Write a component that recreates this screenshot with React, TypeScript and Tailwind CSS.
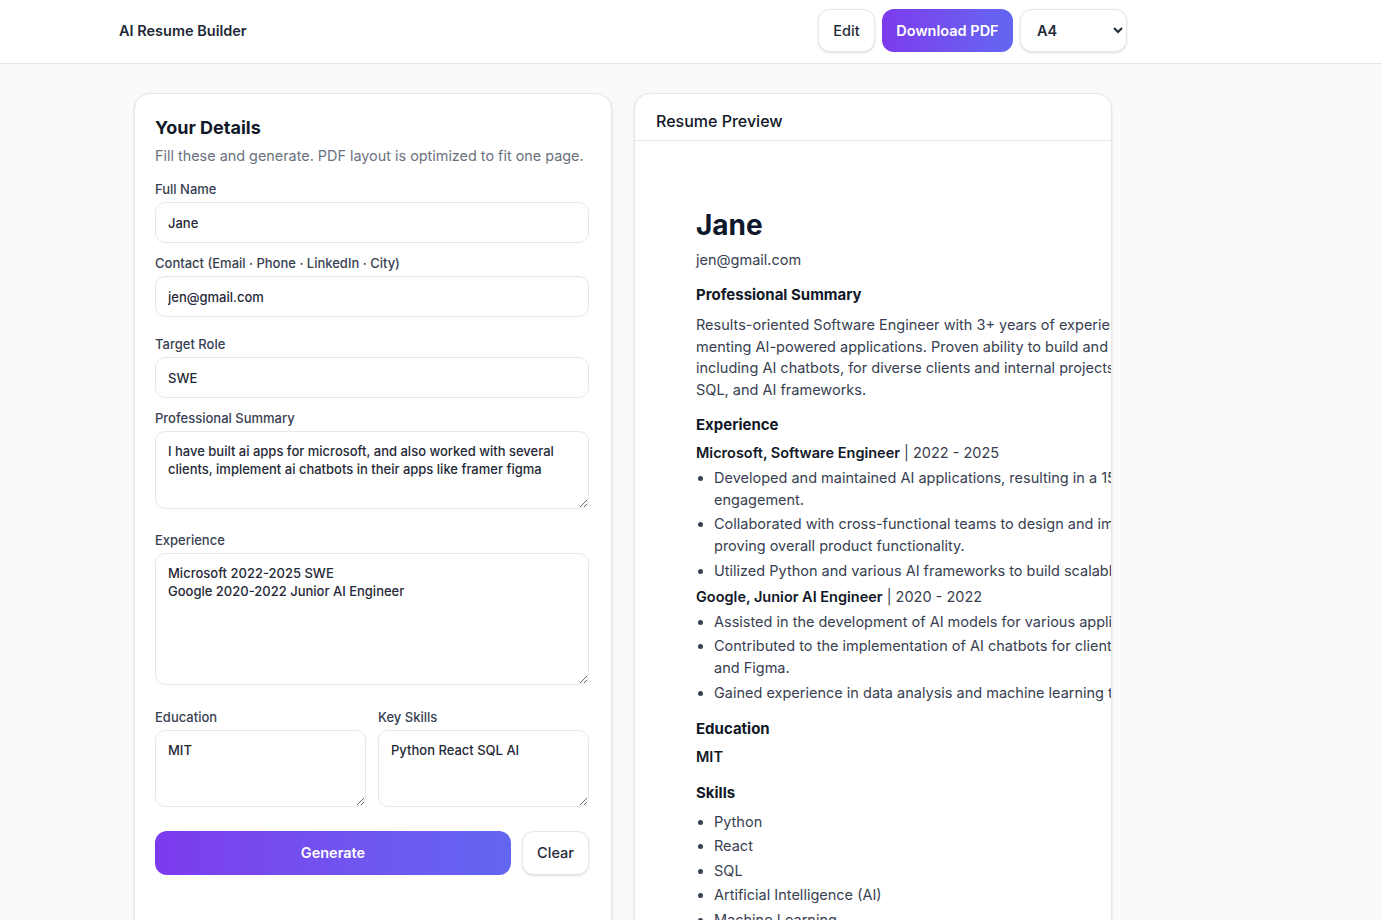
import React from "react";

const inputCls =
  "w-full h-[41px] rounded-[10px] border border-[#e5e7eb] bg-white px-3 text-[13px] font-medium text-[#1f2937] outline-none";
const areaCls =
  "block w-full rounded-[10px] border border-[#e5e7eb] bg-white px-3 pt-[10px] text-[13px] leading-[18px] font-medium text-[#1f2937] outline-none";
const labelCls = "block text-[13px] leading-[18px] font-medium text-[#374151] mb-1";

function Field(p: { label: string; className?: string; children: React.ReactNode }) {
  return (
    <div className={p.className}>
      <label className={labelCls}>{p.label}</label>
      {p.children}
    </div>
  );
}

function Heading(p: { children: React.ReactNode; className?: string }) {
  return <h3 className={"text-[15px] leading-[22px] font-bold text-[#111827] " + (p.className ?? "")}>{p.children}</h3>;
}

export default function App() {
  return (
    <div className="min-h-screen bg-[#f8fafc] font-[family-name:Inter,sans-serif] text-[#1f2937]">
      <header className="h-16 bg-white border-b border-[#e5e7eb]">
        <div className="ml-[119px] w-[1008px] h-full pb-[2px] flex items-center justify-between">
          <div className="text-[14.5px] font-semibold text-[#1f2937]">AI Resume Builder</div>
          <div className="flex items-center gap-[7px]">
            <button className="h-[43px] w-[57px] rounded-xl border border-[#e5e7eb] bg-white shadow-sm text-[14.5px] font-medium text-[#1f2937]">
              Edit
            </button>
            <button className="h-[43px] w-[131px] rounded-xl bg-linear-to-r from-[#7c3aed] to-[#6366f1] text-[14.5px] font-semibold text-white">
              Download PDF
            </button>
            <select
              defaultValue="A4"
              className="h-[43px] w-[107px] pl-[12px] pr-[6px] rounded-xl border border-[#e5e7eb] bg-white shadow-sm text-[14.5px] font-semibold text-[#1f2937]"
            >
              <option>A4</option>
              <option>Letter</option>
            </select>
          </div>
        </div>
      </header>

      <main className="ml-[134px] w-[978px] grid grid-cols-2 gap-[22px] pt-[29px] pb-10">
        <section className="bg-white rounded-2xl border border-[#e5e7eb] shadow-sm pl-[20px] pr-[22px] pt-[20px] pb-[60px]">
          <h2 className="text-[18px] leading-[28px] font-bold text-[#111827]">Your Details</h2>
          <p className="mt-[4px] text-[14.4px] leading-[20px] text-[#6b7280]">
            Fill these and generate. PDF layout is optimized to fit one page.
          </p>

          <Field label="Full Name" className="mt-[14px]">
            <input className={inputCls} defaultValue="Jane" />
          </Field>
          <Field label="Contact (Email · Phone · LinkedIn · City)" className="mt-[11px]">
            <input className={inputCls} defaultValue="jen@gmail.com" />
          </Field>
          <Field label="Target Role" className="mt-[18px]">
            <input className={inputCls} defaultValue="SWE" />
          </Field>
          <Field label="Professional Summary" className="mt-[11px]">
            <textarea
              spellCheck={false}
              className={areaCls + " h-[78px]"}
              defaultValue="I have built ai apps for microsoft, and also worked with several clients, implement ai chatbots in their apps like framer figma"
            />
          </Field>
          <Field label="Experience" className="mt-[22px]">
            <textarea
              spellCheck={false}
              className={areaCls + " h-[132px]"}
              defaultValue={"Microsoft 2022-2025 SWE\nGoogle 2020-2022 Junior AI Engineer"}
            />
          </Field>
          <div className="mt-[23px] grid grid-cols-2 gap-3">
            <Field label="Education">
              <textarea spellCheck={false} className={areaCls + " h-[77px]"} defaultValue="MIT" />
            </Field>
            <Field label="Key Skills">
              <textarea spellCheck={false} className={areaCls + " h-[77px]"} defaultValue="Python React SQL AI" />
            </Field>
          </div>

          <div className="mt-[24px] flex gap-[11px]">
            <button className="flex-1 h-[44px] rounded-xl bg-linear-to-r from-[#7c3aed] to-[#6366f1] text-[14.5px] font-semibold text-white">
              Generate
            </button>
            <button className="w-[67px] h-[44px] rounded-xl border border-[#e5e7eb] bg-white shadow-sm text-[14.5px] font-medium text-[#1f2937]">
              Clear
            </button>
          </div>
        </section>

        <section className="bg-white rounded-2xl border border-[#e5e7eb] shadow-sm overflow-hidden">
          <div className="h-[47px] px-[21px] pt-[15px] border-b border-[#e5e7eb]">
            <h2 className="text-[16px] leading-[24px] font-medium text-[#111827]">Resume Preview</h2>
          </div>
          <div className="w-[794px] pl-[61px] pt-[67px] pb-10 text-[14.5px] leading-[22px] text-[#374151] whitespace-nowrap">
            <h1 className="text-[28px] leading-[34px] font-bold text-[#0f172a]">Jane</h1>
            <p className="mt-[7px]">jen@gmail.com</p>

            <Heading className="mt-[13px]">Professional Summary</Heading>
            <p className="mt-[8px] leading-[21.7px]">
              Results-oriented Software Engineer with 3+ years of experience in developing and imple-
              <br />
              menting AI-powered applications. Proven ability to build and deploy scalable solutions,
              <br />
              including AI chatbots, for diverse clients and internal projects. Skilled in Python, React,
              <br />
              SQL, and AI frameworks.
            </p>

            <Heading className="mt-[13px]">Experience</Heading>
            <p className="mt-[6px]">
              <span className="font-semibold text-[#111827]">Microsoft, Software Engineer</span> | 2022 - 2025
            </p>
            <ul className="mt-[3px] list-disc pl-[18px] flex flex-col gap-[2.5px]">
              <li>
                Developed and maintained AI applications, resulting in a 15% increase in user
                <br />
                engagement.
              </li>
              <li>
                Collaborated with cross-functional teams to design and implement AI chatbots, im-
                <br />
                proving overall product functionality.
              </li>
              <li>Utilized Python and various AI frameworks to build scalable solutions.</li>
            </ul>
            <p className="mt-[4px]">
              <span className="font-semibold text-[#111827]">Google, Junior AI Engineer</span> | 2020 - 2022
            </p>
            <ul className="mt-[3px] list-disc pl-[18px] flex flex-col gap-[2.5px]">
              <li>Assisted in the development of AI models for various applications.</li>
              <li>
                Contributed to the implementation of AI chatbots for clients, including Framer
                <br />
                and Figma.
              </li>
              <li>Gained experience in data analysis and machine learning techniques.</li>
            </ul>

            <Heading className="mt-[14px]">Education</Heading>
            <p className="mt-[6px] font-semibold text-[#111827]">MIT</p>

            <Heading className="mt-[14px]">Skills</Heading>
            <ul className="mt-[7px] list-disc pl-[18px] flex flex-col gap-[2.5px]">
              <li>Python</li>
              <li>React</li>
              <li>SQL</li>
              <li>Artificial Intelligence (AI)</li>
              <li>Machine Learning</li>
            </ul>
          </div>
        </section>
      </main>
    </div>
  );
}
